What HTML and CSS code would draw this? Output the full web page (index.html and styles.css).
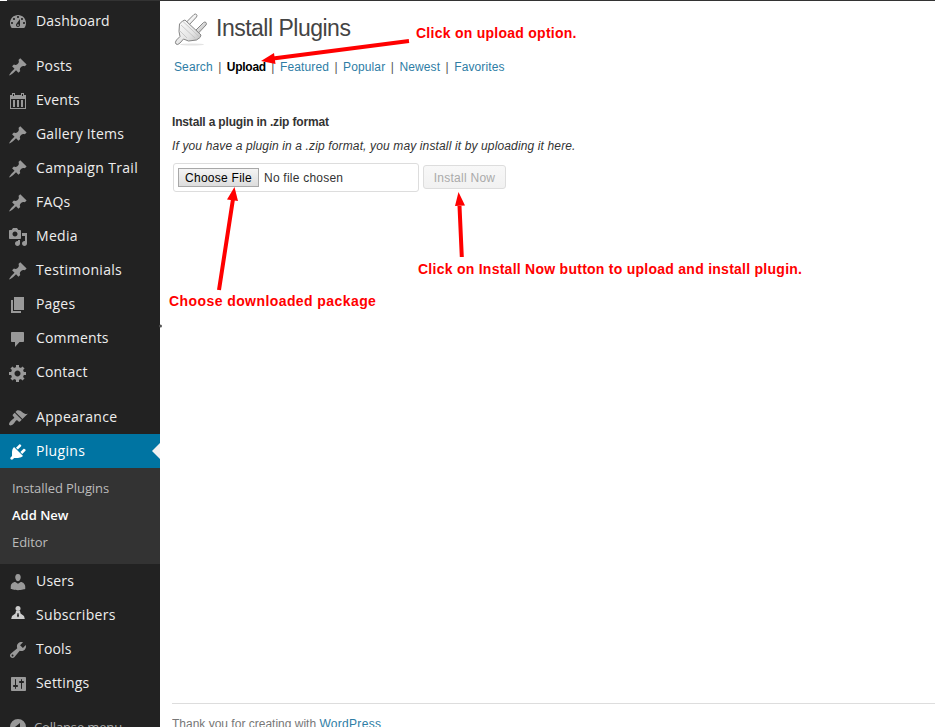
FILE: index.html
```html
<!DOCTYPE html>
<html lang="en">
<head>
<meta charset="utf-8">
<title>Install Plugins</title>
<link rel="stylesheet" href="styles.css">
</head>
<body>
<svg class="defs" aria-hidden="true">
  <symbol id="pin" viewBox="0 0 20 20"><path d="M10.44 3.02l1.82-1.82 6.36 6.35-1.83 1.82c-1.05-.68-2.48-.57-3.41.36l-.75.75c-.92.93-1.04 2.35-.35 3.41l-1.83 1.82-2.41-2.41-2.8 2.79c-.42.42-3.38 2.71-3.8 2.29s1.86-3.39 2.28-3.81l2.79-2.79L4.1 9.36l1.83-1.82c1.05.69 2.48.57 3.4-.36l.75-.75c.93-.92 1.05-2.35.36-3.41z"/></symbol>
</svg>
<div class="adminbar"></div>
<div class="layout">
  <nav class="sidebar">
    <a class="item"><svg class="icon" viewBox="0 0 20 20"><path fill-rule="evenodd" d="M3.76 16h12.48c1.1-1.37 1.76-3.11 1.76-5 0-4.42-3.58-8-8-8s-8 3.58-8 8c0 1.89.66 3.63 1.76 5zM10 4c.55 0 1 .45 1 1s-.45 1-1 1-1-.45-1-1 .45-1 1-1zM6 6c.55 0 1 .45 1 1s-.45 1-1 1-1-.45-1-1 .45-1 1-1zm8 0c.55 0 1 .45 1 1s-.45 1-1 1-1-.45-1-1 .45-1 1-1zm-5.37 5.55L12 7v6c0 1.1-.9 2-2 2s-2-.9-2-2c0-.57.24-1.08.63-1.45zM4 10c.55 0 1 .45 1 1s-.45 1-1 1-1-.45-1-1 .45-1 1-1zm12 0c.55 0 1 .45 1 1s-.45 1-1 1-1-.45-1-1 .45-1 1-1zM10 12.2a.9.9 0 1 0 0 1.8.9.9 0 1 0 0-1.8z"/></svg><span>Dashboard</span></a>
    <div class="separator"></div>
    <a class="item"><svg class="icon"><use href="#pin"/></svg><span>Posts</span></a>
    <a class="item"><svg class="icon" viewBox="0 0 20 20"><path fill-rule="evenodd" d="M2 4h2V2h3v2h6V2h3v2h2v14H2zM3 8v9h14V8zM5 3v2h1V3zm9 0v2h1V3zM5 9h2v7H5zm4 0h2v7H9zm4 0h2v7h-2z"/></svg><span>Events</span></a>
    <a class="item"><svg class="icon"><use href="#pin"/></svg><span>Gallery Items</span></a>
    <a class="item wide"><svg class="icon"><use href="#pin"/></svg><span>Campaign Trail</span></a>
    <a class="item"><svg class="icon"><use href="#pin"/></svg><span>FAQs</span></a>
    <a class="item wide"><svg class="icon" viewBox="0 0 20 20"><path fill-rule="evenodd" d="M13 11V4c0-.55-.45-1-1-1h-1.670L9 1H5L3.670 3H2c-.55 0-1 .45-1 1v7c0 .55.45 1 1 1h10c.55 0 1-.45 1-1zM7 4.500c1.380 0 2.500 1.120 2.500 2.500S8.380 9.500 7 9.500 4.500 8.380 4.500 7 5.620 4.500 7 4.500zM14 6h5v10.500c0 1.380-1.120 2.500-2.500 2.500S14 17.880 14 16.500s1.120-2.500 2.500-2.500c.17 0 .34.02.5.05V9h-3zm-4 8.050V13h2v3.500c0 1.380-1.120 2.500-2.500 2.500S7 17.880 7 16.500 8.120 14 9.500 14c.17 0 .34.02.5.05z"/></svg><span>Media</span></a>
    <a class="item wide"><svg class="icon"><use href="#pin"/></svg><span>Testimonials</span></a>
    <a class="item"><svg class="icon" viewBox="0 0 20 20"><path d="M6 15V2h10v13zM5 16h8v2H3V5h2z"/></svg><span>Pages</span></a>
    <a class="item"><svg class="icon" viewBox="0 0 20 20"><path d="M4 3h11c.6 0 1 .4 1 1v8c0 .6-.4 1-1 1h-3.500l-4.500 5v-5H4c-.6 0-1-.4-1-1V4c0-.6.4-1 1-1z"/></svg><span>Comments</span></a>
    <a class="item"><svg class="icon" viewBox="0 0 20 20"><path fill-rule="evenodd" d="M18 12h-2.180c-.17.7-.44 1.350-.81 1.930l1.540 1.540-2.100 2.100-1.540-1.540c-.58.36-1.230.63-1.910.79V19H8v-2.180c-.68-.16-1.330-.43-1.910-.79l-1.540 1.540-2.120-2.120 1.540-1.540c-.36-.58-.63-1.230-.79-1.910H1V9.030h2.170c.16-.7.44-1.350.8-1.940L2.430 5.550l2.100-2.100 1.540 1.540c.58-.37 1.240-.64 1.930-.81V2h3v2.180c.68.16 1.330.43 1.910.79l1.540-1.540 2.120 2.120-1.540 1.540c.36.59.64 1.240.8 1.940H18zm-8.500 1.500c1.660 0 3-1.340 3-3s-1.340-3-3-3-3 1.340-3 3 1.340 3 3 3z"/></svg><span>Contact</span></a>
    <div class="separator"></div>
    <a class="item wide"><svg class="icon" viewBox="0 0 20 20"><path d="M14.480 11.060L7.410 3.990l1.500-1.500c.5-.56 2.300-.47 3.510.32 1.210.8 1.430 1.280 2.910 2.100 1.180.64 2.450 1.260 4.450.85zm-.71.71L6.700 4.700 4.930 6.470c-.39.39-.39 1.020 0 1.410l1.060 1.060c.39.39.39 1.030 0 1.420-.6.6-1.430 1.110-2.210 1.690-.35.26-.7.53-1.010.84C1.430 14.230.4 16.080 1.400 17.070c.99 1 2.840-.03 4.180-1.360.31-.31.58-.66.85-1.020.57-.78 1.080-1.610 1.690-2.210.39-.39 1.020-.39 1.410 0l1.060 1.060c.39.39 1.020.39 1.410 0z"/></svg><span>Appearance</span></a>
    <a class="item wide current"><svg class="icon" viewBox="0 0 20 20"><path d="M13.110 4.360L9.870 7.600 8 5.730l3.240-3.240c.35-.34 1.050-.2 1.560.32.52.51.66 1.210.31 1.550zm-8 1.770l.91-1.120 9.010 9.010-1.190.84c-.71.71-2.630 1.160-3.820 1.160H6.140L4.900 17.260c-.59.59-1.540.59-2.120 0-.59-.58-.59-1.530 0-2.120l1.240-1.240v-3.880c0-1.130.4-3.190 1.090-3.890zm7.260 3.970l3.240-3.240c.34-.35 1.040-.21 1.550.31.52.51.66 1.210.31 1.550l-3.240 3.250z"/></svg><span>Plugins</span></a>
    <div class="submenu">
      <a>Installed Plugins</a>
      <a class="active">Add New</a>
      <a>Editor</a>
    </div>
    <a class="item"><svg class="icon" viewBox="0 0 20 20"><path d="M10 9.250c-2.270 0-2.730-3.440-2.730-3.440C7 4.020 7.820 2 9.970 2c2.160 0 2.980 2.020 2.710 3.810 0 0-.41 3.440-2.680 3.440zm0 2.570L12.720 10c2.390 0 4.520 2.330 4.520 4.530v2.490s-3.650 1.130-7.240 1.130c-3.650 0-7.240-1.130-7.240-1.130v-2.490c0-2.250 1.940-4.480 4.470-4.480z"/></svg><span>Users</span></a>
    <a class="item wide"><svg class="icon person" viewBox="0 0 20 20"><circle cx="10" cy="4.500" r="2.500"/><path d="M8 7h4l.6 2.500 3.400 2.500.8 3H3.200l.8-3 3.400-2.500z"/><path class="tie" d="M9.600 9h.8l.6 3-1 1.500-1-1.500z"/></svg><span>Subscribers</span></a>
    <a class="item"><svg class="icon" viewBox="0 0 20 20"><path fill-rule="evenodd" d="M16.680 9.770c-1.340 1.340-3.300 1.670-4.950.99l-5.410 6.520c-.99.99-2.590.99-3.580 0s-.99-2.590 0-3.570l6.520-5.420c-.68-1.650-.35-3.610.99-4.950 1.280-1.280 3.120-1.620 4.720-1.060l-2.890 2.890 2.820 2.820 2.860-2.870c.53 1.580.18 3.390-1.080 4.650zM3.810 16.210c.4.39 1.040.39 1.430 0 .4-.4.4-1.040 0-1.430-.39-.4-1.030-.4-1.430 0-.39.39-.39 1.030 0 1.430z"/></svg><span>Tools</span></a>
    <a class="item"><svg class="icon" viewBox="0 0 20 20"><path fill-rule="evenodd" d="M18 16V4c0-.55-.45-1-1-1H4c-.55 0-1 .45-1 1v12c0 .55.45 1 1 1h13c.55 0 1-.45 1-1zM8 11h1c.55 0 1 .45 1 1s-.45 1-1 1H8v1.500c0 .28-.22.5-.5.5s-.5-.22-.5-.5V13H6c-.55 0-1-.45-1-1s.45-1 1-1h1V5.500c0-.28.22-.5.5-.5s.5.22.5.5zm5-2h-1c-.55 0-1-.45-1-1s.45-1 1-1h1V5.500c0-.28.22-.5.5-.5s.5.22.5.5V7h1c.55 0 1 .45 1 1s-.45 1-1 1h-1v5.500c0 .28-.22.5-.5.5s-.5-.22-.5-.5z"/></svg><span>Settings</span></a>
    <div class="separator"></div>
    <a class="item collapse"><svg class="icon" viewBox="0 0 20 20"><path fill-rule="evenodd" d="M10 0a8 8 0 1 0 0 16 8 8 0 1 0 0-16zm2 4v8L7 8z"/></svg><span>Collapse menu</span></a>
  </nav>
  <main class="content">
    <header class="heading">
      <svg class="plug" viewBox="0 0 34 34">
        <defs><linearGradient id="metal" x1="0" y1="0" x2="1" y2="1"><stop offset="0" stop-color="#fff"/><stop offset=".6" stop-color="#e4e4e4"/><stop offset="1" stop-color="#b5b5b5"/></linearGradient></defs>
        <ellipse class="shadow" cx="18" cy="32.500" rx="12" ry="1"/>
        <path class="prong" d="M12.500 10l7.500-7.500q1.500-1 2.500 0t0 2.500l-7.500 8zM22 18l7.500-7.500q1.500-1 2.500 0t0 2.500l-7.500 8z"/>
        <path class="body" d="M8.500 9l2.500-1 16 15-1 2.500-3.500 2.500-8 1-5-2-3.500 4q-2.500 2.500-4 1t.5-4l3.500-3.500-1-5 .5-7.500z"/>
        <path class="detail" d="M9 9.500l16.500 15.500M7 13l14 13M6 19l7 7"/>
      </svg>
      <h1>Install Plugins</h1>
    </header>
    <div class="tabs">
      <a>Search</a><i>|</i><a class="active">Upload</a><i>|</i><a>Featured</a><i>|</i><a>Popular</a><i>|</i><a>Newest</a><i>|</i><a>Favorites</a>
    </div>
    <h4>Install a plugin in .zip format</h4>
    <p class="help">If you have a plugin in a .zip format, you may install it by uploading it here.</p>
    <div class="upload">
      <div class="file"><button class="choose">Choose File</button><span>No file chosen</span></div>
      <button class="install" disabled>Install Now</button>
    </div>
    <footer>Thank you for creating with <a>WordPress</a></footer>
  </main>
</div>
<div class="annotations">
  <svg class="arrows" viewBox="0 0 935 727">
    <path class="shaft" d="M409 41L273 58.500M219 290L233 199M461.800 257L459.500 206"/>
    <path class="head" d="M261 61l13-8 1.500 11zM234.500 187l3.500 14-11-1.500zM458.500 192l6.500 13.500-10 .5z"/>
    <circle class="speck" cx="160.500" cy="326" r="1.500"/>
  </svg>
  <span class="note note-upload">Click on upload option.</span>
  <span class="note note-install">Click on Install Now button to upload and install plugin.</span>
  <span class="note note-choose">Choose downloaded package</span>
</div>
</body>
</html>
```
FILE: styles.css
```css
* { box-sizing: border-box; }
body {
  margin: 0;
  width: 935px;
  height: 727px;
  overflow: hidden;
  position: relative;
  background: #fff;
  font-family: "Liberation Sans", Arial, sans-serif;
  font-size: 12px;
  color: #333;
}
.defs { position: absolute; width: 0; height: 0; }
.adminbar { height: 1px; background: #333; border-left: 7px solid #fff; }
.layout { display: flex; height: 726px; }

.sidebar {
  flex: 0 0 160px;
  background: #222;
  padding-top: 3px;
  overflow: hidden;
  font-family: "Open Sans", sans-serif;
}
.item {
  display: flex;
  height: 34px;
  padding-left: 8px;
  gap: 8px;
  color: #eee;
  font-size: 14px;
  line-height: 34px;
  letter-spacing: 0.18px;
  white-space: nowrap;
}
.wide { letter-spacing: 0.32px; }
.icon { width: 20px; height: 20px; margin-top: 8px; fill: #999; flex: none; }
.separator { height: 11px; }
.current { background: #0074a2; color: #fff; position: relative; }
.current .icon { fill: #fff; }
.current::after {
  content: "";
  position: absolute;
  right: 0;
  top: 9px;
  border: 8px solid transparent;
  border-left: 0;
  border-right-color: #f1f1f1;
}
.person .tie { fill: #222; }
.person { fill: #ccc; margin-top: 6px; }
.submenu {
  height: 96px;
  padding: 7px 0 0 12px;
  background: #333;
  font-size: 13px;
  line-height: 27px;
  letter-spacing: -0.08px;
}
.submenu a { display: block; color: #bbb; }
.submenu .active { color: #fff; font-weight: 600; letter-spacing: 0; }
.collapse { color: #aaa; font-size: 13px; gap: 6px; letter-spacing: -0.15px; line-height: 33px; }

.content { flex: 1; display: flex; flex-direction: column; padding-left: 12px; }
.heading { display: flex; height: 53px; }
.plug { width: 34px; height: 34px; margin: 11px 0 0 2px; fill: url(#metal); stroke: #858585; stroke-width: 1; }
.plug .detail { fill: none; stroke: #c0c0c0; stroke-width: .8; }
.plug .shadow { fill: #e4e4e4; stroke: none; }
h1 {
  margin: 13px 0 0 8px;
  font-size: 23px;
  font-weight: 400;
  line-height: 28px;
  letter-spacing: -0.5px;
  color: #444;
}
.tabs { display: flex; height: 26px; padding-left: 2px; line-height: 26px; letter-spacing: 0.12px; }
.tabs a, footer a { color: #2e7da5; }
.tabs .active { color: #000; font-weight: 700; letter-spacing: -0.27px; }
.tabs i { width: 14.1px; text-align: center; font-style: normal; color: #555; }
h4 { margin: 34px 0 0; font-size: 12px; line-height: 16px; letter-spacing: -0.17px; }
.help { margin: 8px 0 0; line-height: 16px; font-style: italic; letter-spacing: 0.135px; }
.upload { display: flex; align-items: flex-start; margin: 9px 0 0 1px; gap: 4px; }
.file {
  display: flex;
  align-items: center;
  gap: 5px;
  width: 246px;
  height: 29px;
  padding-left: 4px;
  border: 1px solid #ddd;
  border-radius: 3px;
  letter-spacing: 0.23px;
}
button { font: 12px "Liberation Sans", Arial, sans-serif; padding: 0; letter-spacing: 0.25px; }
.choose { width: 81px; height: 19px; border: 1px solid #a8a8a8; background: linear-gradient(#f4f4f4, #ddd); color: #000; }
.install {
  width: 83px;
  height: 24px;
  margin-top: 2px;
  padding-top: 1px;
  border: 1px solid #ddd;
  border-radius: 3px;
  background: linear-gradient(#f8f8f8, #f1f1f1);
  color: #aaa;
}
footer { margin-top: auto; height: 24px; border-top: 1px solid #ddd; padding-top: 12px; line-height: 16px; color: #777; overflow: hidden; }
footer a { letter-spacing: 0.3px; }

/* Callouts laid over the page */
.annotations { position: absolute; inset: 0; pointer-events: none; }
.arrows { position: absolute; inset: 0; width: 935px; height: 727px; }
.shaft { stroke: #f00; stroke-width: 4; fill: none; }
.head { fill: #f00; }
.speck { fill: #555; }
.note { position: absolute; color: #f00; font-size: 14px; line-height: 16px; font-weight: 700; white-space: nowrap; letter-spacing: 0.26px; }
.note-upload { left: 416px; top: 25px; }
.note-install { left: 418px; top: 261px; }
.note-choose { left: 169px; top: 293px; letter-spacing: 0.42px; }
```
